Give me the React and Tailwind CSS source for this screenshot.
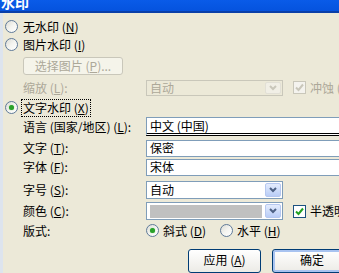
import React from "react";

const F = { fontFamily: '"Noto Sans CJK SC", "Noto Sans", sans-serif' };

function U({ children }) {
  return <span className="underline underline-offset-[1px]">{children}</span>;
}

function Radio({ checked, disabledLook }) {
  return (
    <span className="relative inline-flex h-[13px] w-[13px] shrink-0 items-center justify-center rounded-full border border-[#5f7a99] bg-gradient-to-br from-[#dcdcd5] via-[#f4f4f0] to-white">
      {checked && <span className="h-[5px] w-[5px] rounded-full bg-[#2aa12a] shadow-[0_0_1px_#62c862]" />}
    </span>
  );
}

function Check({ disabled }) {
  return (
    <span
      className={
        "inline-flex h-[13px] w-[13px] shrink-0 items-center justify-center border " +
        (disabled ? "border-[#c9c7ba] bg-[#f4f3ee]" : "border-[#1c5180] bg-white")
      }
    >
      <svg width="9" height="9" viewBox="0 0 9 9">
        <path
          d="M1 4.5 L3.5 7 L8 1.5"
          fill="none"
          stroke={disabled ? "#c9c7ba" : "#21a121"}
          strokeWidth="2"
        />
      </svg>
    </span>
  );
}

function Arrow({ disabled }) {
  return (
    <span
      className={
        "flex h-full w-[16px] shrink-0 items-center justify-center rounded-[2px] border " +
        (disabled
          ? "border-[#e2e0d6] bg-[#f1efe6]"
          : "border-[#b6c8f0] bg-gradient-to-b from-[#e4ecfd] to-[#b9cdf7]")
      }
    >
      <svg width="8" height="6" viewBox="0 0 8 6">
        <path
          d="M1 1 L4 4 L7 1"
          fill="none"
          stroke={disabled ? "#c9c7ba" : "#4d6185"}
          strokeWidth="2"
        />
      </svg>
    </span>
  );
}

export default function App() {
  return (
    <div className="h-[273px] w-[339px] overflow-hidden bg-[#ece9d8] text-[12px] leading-none text-black" style={F}>
      {/* title bar */}
      <div className="h-[13px] overflow-hidden border-b-[2px] border-[#0a3fa8] bg-gradient-to-b from-[#0a5be8] to-[#0553de]">
        <div className="mt-[-6px] pl-[1px] text-[14px] font-bold leading-[16px] text-white">水印</div>
      </div>
      <div className="flex h-[260px]">
        <div className="w-[3px] shrink-0 bg-[#dde4ee]" />
        <div className="flex flex-1 flex-col">
          {/* 无水印 */}
          <div className="mt-[7px] flex h-[13px] items-center gap-[5px] pl-[2px]">
            <Radio />
            <span>无水印 (<U>N</U>)</span>
          </div>
          {/* 图片水印 */}
          <div className="mt-[5px] flex h-[13px] items-center gap-[5px] pl-[2px]">
            <Radio />
            <span>图片水印 (<U>I</U>)</span>
          </div>
          {/* 选择图片 */}
          <div className="mt-[6px] flex h-[18px] pl-[20px]">
            <div className="flex w-[100px] items-center justify-center rounded-[3px] border border-[#c9c7ba] bg-[#f5f4ea] text-[#aca899]">
              选择图片 (<U>P</U>)...
            </div>
          </div>
          {/* 缩放 */}
          <div className="mt-[5px] flex h-[17px] items-center pl-[20px]">
            <span className="w-[123px] text-[#aca899]">缩放 (<U>L</U>):</span>
            <div className="flex h-full w-[137px] items-center border border-[#c9c7ba] bg-[#ece9d8] p-[1px] pl-[3px] text-[#aca899]">
              <span className="flex-1">自动</span>
              <Arrow disabled />
            </div>
            <span className="ml-[10px] flex items-center gap-[4px] text-[#aca899]">
              <Check disabled />
              <span className="whitespace-nowrap">冲蚀 (<U>W</U>)</span>
            </span>
          </div>
          {/* 文字水印 */}
          <div className="mt-[3px] flex h-[17px] items-center gap-[3px] pl-[2px]">
            <Radio checked />
            <span className="border border-dotted border-black px-[1px] py-[2px]">文字水印 (<U>X</U>)</span>
          </div>
          {/* 语言 */}
          <div className="mt-[1px] flex h-[19px] items-center pl-[20px]">
            <span className="w-[123px]">语言 (国家/地区) (<U>L</U>):</span>
            <div className="flex h-full flex-1 items-center border border-[#7f9db9] border-b-[3px] border-b-black border-r-0 bg-white pl-[3px]" style={{ borderBottomStyle: "double" }}>
              <span className="underline underline-offset-[2px]">中文 (中国)</span>
            </div>
          </div>
          {/* 文字 */}
          <div className="mt-[4px] flex h-[17px] items-center pl-[20px]">
            <span className="w-[123px]">文字 (<U>T</U>):</span>
            <div className="flex h-full flex-1 items-center border border-r-0 border-[#7f9db9] bg-white pl-[3px]">保密</div>
          </div>
          {/* 字体 */}
          <div className="mt-[2px] flex h-[18px] items-center pl-[20px]">
            <span className="w-[123px]">字体 (<U>F</U>):</span>
            <div className="flex h-full flex-1 items-center border border-r-0 border-[#7f9db9] bg-white pl-[3px]">宋体</div>
          </div>
          {/* 字号 */}
          <div className="mt-[5px] flex h-[18px] items-center pl-[20px]">
            <span className="w-[123px]">字号 (<U>S</U>):</span>
            <div className="flex h-full w-[137px] items-center border border-[#7f9db9] bg-white p-[1px] pl-[3px]">
              <span className="flex-1">自动</span>
              <Arrow />
            </div>
          </div>
          {/* 颜色 */}
          <div className="mt-[3px] flex h-[19px] items-center pl-[20px]">
            <span className="w-[123px]">颜色 (<U>C</U>):</span>
            <div className="flex h-full w-[137px] items-center gap-[3px] border border-[#7f9db9] bg-white p-[1px] pl-[3px]">
              <span className="h-[13px] flex-1 bg-[#c0c0c0]" />
              <Arrow />
            </div>
            <span className="ml-[10px] flex items-center gap-[4px]">
              <Check />
              <span className="whitespace-nowrap">半透明 (<U>E</U>)</span>
            </span>
          </div>
          {/* 版式 */}
          <div className="mt-[4px] flex h-[13px] items-center pl-[20px]">
            <span className="w-[123px]">版式:</span>
            <span className="flex items-center gap-[4px]">
              <Radio checked />
              <span>斜式 (<U>D</U>)</span>
            </span>
            <span className="ml-[14px] flex items-center gap-[4px]">
              <Radio />
              <span>水平 (<U>H</U>)</span>
            </span>
          </div>
          {/* buttons */}
          <div className="mt-[12px] flex h-[24px] pl-[185px]">
            <div className="flex w-[73px] items-start justify-center rounded-[3px] border border-[#003c74] bg-gradient-to-b from-white to-[#ecebe6] pt-[4px]">
              应用 (<U>A</U>)
            </div>
            <div className="ml-[11px] flex w-[80px] items-start justify-center rounded-[3px] border border-[#003c74] bg-gradient-to-b from-white to-[#ecebe6] pt-[4px] shadow-[inset_0_0_0_2px_#a8c3f0]">
              确定
            </div>
          </div>
        </div>
      </div>
    </div>
  );
}
